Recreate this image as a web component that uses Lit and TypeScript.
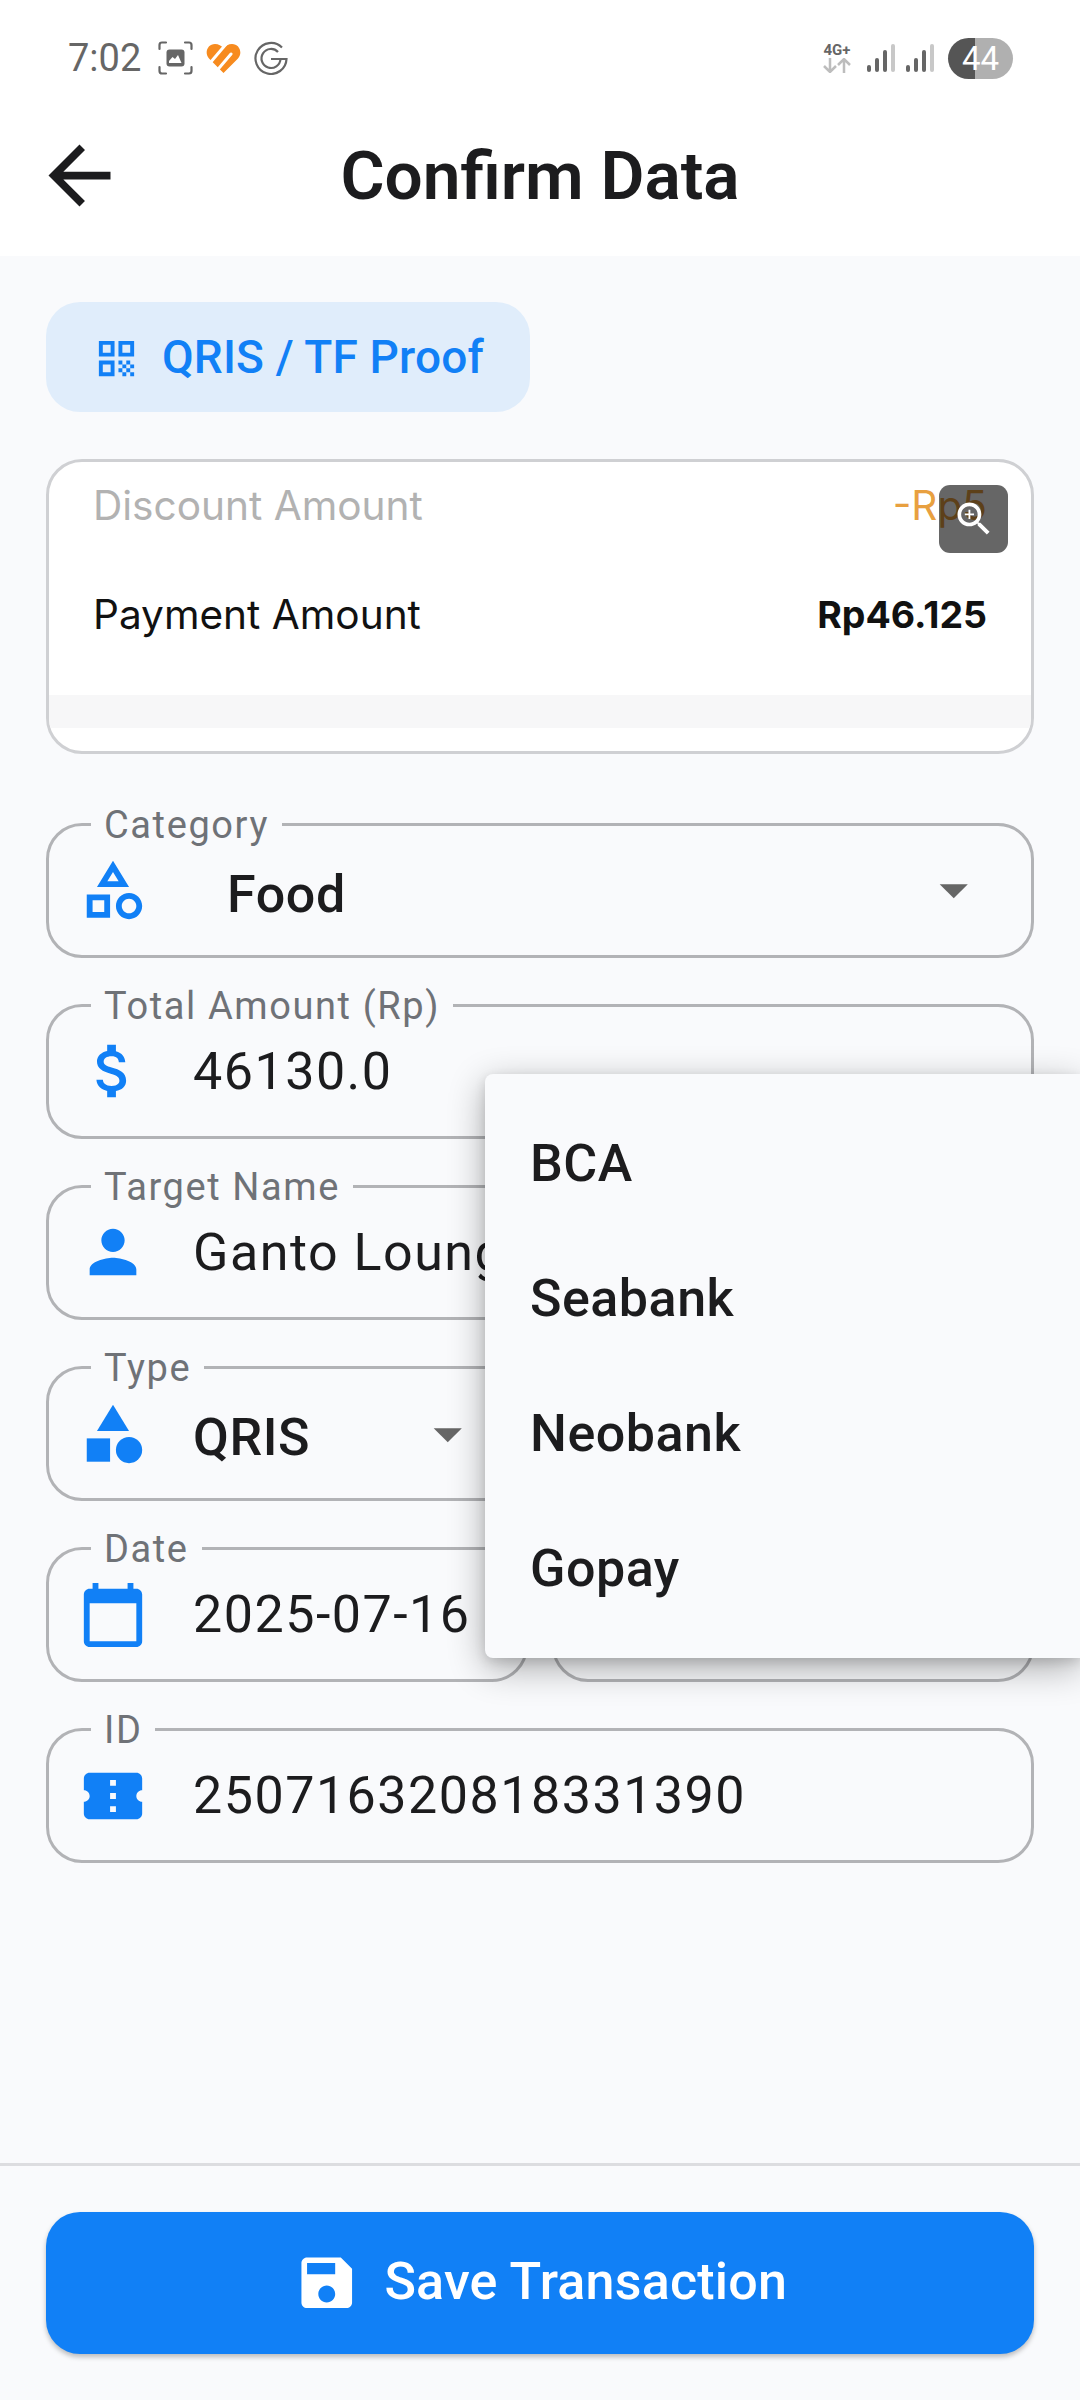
import { LitElement, html, css, svg } from "lit";
import { customElement } from "lit/decorators.js";

const icons = {
  back: svg`<path d="M20 11H7.83l5.59-5.59L12 4l-8 8 8 8 1.41-1.41L7.83 13H20v-2z"/>`,
  qr: svg`<path d="M3 11h8V3H3v8zm2-6h4v4H5V5zM3 21h8v-8H3v8zm2-6h4v4H5v-4zM13 3v8h8V3h-8zm6 6h-4V5h4v4zM19 19h2v2h-2zM13 13h2v2h-2zM15 15h2v2h-2zM13 17h2v2h-2zM15 19h2v2h-2zM17 17h2v2h-2zM17 13h2v2h-2zM19 15h2v2h-2z"/>`,
  zoom: svg`<path d="M15.5 14h-.79l-.28-.27C15.41 12.59 16 11.11 16 9.5 16 5.91 13.09 3 9.5 3S3 5.91 3 9.5 5.91 16 9.5 16c1.61 0 3.09-.59 4.23-1.57l.27.28v.79l5 4.99L20.49 19l-4.99-5zm-6 0C7.01 14 5 11.99 5 9.5S7.01 5 9.5 5 14 7.01 14 9.5 11.99 14 9.5 14z"/><path d="M12 10h-2v2H9v-2H7V9h2V7h1v2h2v1z"/>`,
  categoryOutline: svg`<path d="M12 2l-5.5 9h11L12 2zm0 3.84L13.93 9h-3.87L12 5.84zM17.5 13c-2.49 0-4.5 2.01-4.5 4.5s2.01 4.5 4.5 4.5 4.5-2.01 4.5-4.5-2.01-4.5-4.5-4.5zm0 7c-1.38 0-2.5-1.12-2.5-2.5s1.12-2.5 2.5-2.5 2.5 1.12 2.5 2.5-1.12 2.5-2.5 2.5zM3 21.5h8v-8H3v8zm2-6h4v4H5v-4z"/>`,
  category: svg`<path d="M12 2l-5.5 9h11z"/><circle cx="17.5" cy="17.5" r="4.5"/><path d="M3 13.5h8v8H3z"/>`,
  money: svg`<path d="M11.8 10.9c-2.27-.59-3-1.2-3-2.15 0-1.09 1.01-1.85 2.7-1.85 1.78 0 2.44.85 2.5 2.1h2.21c-.07-1.72-1.12-3.3-3.21-3.81V3h-3v2.16c-1.94.42-3.5 1.68-3.5 3.61 0 2.31 1.91 3.46 4.7 4.13 2.5.6 3 1.48 3 2.41 0 .69-.49 1.79-2.7 1.79-2.06 0-2.87-.92-2.98-2.1h-2.2c.12 2.19 1.76 3.42 3.68 3.83V21h3v-2.15c1.95-.37 3.5-1.5 3.5-3.55 0-2.84-2.43-3.81-4.7-4.4z"/>`,
  person: svg`<path d="M12 12c2.21 0 4-1.79 4-4s-1.79-4-4-4-4 1.79-4 4 1.79 4 4 4zm0 2c-2.67 0-8 1.34-8 4v2h16v-2c0-2.66-5.33-4-8-4z"/>`,
  calendar: svg`<path d="M20 3h-1V1h-2v2H7V1H5v2H4c-1.1 0-2 .9-2 2v16c0 1.1.9 2 2 2h16c1.1 0 2-.9 2-2V5c0-1.1-.9-2-2-2zm0 18H4V8h16v13z"/>`,
  ticket: svg`<path d="M22 10V6c0-1.11-.9-2-2-2H4c-1.1 0-1.99.89-1.99 2v4c1.1 0 1.99.9 1.99 2s-.89 2-2 2v4c0 1.1.9 2 2 2h16c1.1 0 2-.9 2-2v-4c-1.1 0-2-.9-2-2s.9-2 2-2zm-9 7.5h-2v-2h2v2zm0-4.5h-2v-2h2v2zm0-4.5h-2v-2h2v2z"/>`,
  drop: svg`<path d="M7 10l5 5 5-5z"/>`,
  save: svg`<path d="M17 3H5c-1.11 0-2 .9-2 2v14c0 1.1.89 2 2 2h14c1.1 0 2-.9 2-2V7l-4-4zm-5 16c-1.66 0-3-1.34-3-3s1.34-3 3-3 3 1.34 3 3-1.34 3-3 3zm3-10H5V5h10v4z"/>`,
};

const icon = (body: unknown, cls: string) =>
  html`<svg class=${cls} viewBox="0 0 24 24" fill="currentColor">${body}</svg>`;

@customElement("app-root")
export class AppRoot extends LitElement {
  static styles = css`
    :host {
      display: block;
      font-family: Roboto, "Liberation Sans", sans-serif;
      color: #1c1c1e;
    }
    .page {
      position: relative;
      width: 1080px;
      height: 2400px;
      overflow: hidden;
      display: flex;
      flex-direction: column;
      background: #f9fafc;
    }
    .top {
      height: 256px;
      background: #fff;
      flex: none;
    }
    .status {
      height: 84px;
      padding: 32px 67px 0 68px;
      box-sizing: border-box;
      display: flex;
      align-items: center;
      color: #666;
    }
    .time {
      font-size: 38px;
      width: 77px;
      letter-spacing: 0;
    }
    .st-left {
      display: flex;
      align-items: center;
      gap: 13px;
    }
    .st-right {
      margin-left: auto;
      display: flex;
      align-items: center;
    }
    .net {
      width: 36px;
      margin-right: 12px;
      display: flex;
      flex-direction: column;
      align-items: center;
      font-size: 15px;
      font-weight: 700;
      line-height: 15px;
    }
    .bars {
      display: flex;
      align-items: flex-end;
      gap: 4px;
      height: 28px;
      margin-right: 11px;
    }
    .bars i {
      display: block;
      width: 4px;
      background: #666;
      border-radius: 2px;
    }
    .bars i:last-child {
      background: #c8c8c8;
    }
    .battery {
      width: 65px;
      height: 41px;
      margin-left: 3px;
      border-radius: 21px;
      display: flex;
      align-items: center;
      justify-content: center;
      color: #fff;
      font-size: 33px;
      background: linear-gradient(90deg, #555 0 42%, #b0b0b0 42% 100%);
    }
    .bar {
      height: 171px;
      padding-top: 11px;
      box-sizing: border-box;
      display: flex;
      align-items: center;
      position: relative;
    }
    .back {
      width: 93px;
      height: 93px;
      margin-left: 33px;
      color: #1c1c1e;
    }
    h1 {
      flex: 1;
      margin: 0 0 0 -126px;
      text-align: center;
      font-size: 67.5px;
      font-weight: 600;
      letter-spacing: 0;
    }
    .form {
      flex: 1;
      padding: 46px 46px 0;
      display: flex;
      flex-direction: column;
      min-height: 0;
    }
    .chip {
      align-self: flex-start;
      width: 484px;
      height: 110px;
      box-sizing: border-box;
      padding-left: 47px;
      display: flex;
      align-items: center;
      gap: 22px;
      border-radius: 34px;
      background: #e0edfb;
      color: #1180f6;
      font-size: 46px;
      font-weight: 500;
      letter-spacing: 0.15px;
    }
    .chip svg {
      width: 47px;
      height: 47px;
      margin-top: 2px;
      flex: none;
    }
    .card {
      position: relative;
      margin: 47px 0 68.5px;
      height: 295px;
      box-sizing: border-box;
      border: 3px solid #cfd0d3;
      border-radius: 36px;
      background: #fff;
      overflow: hidden;
      padding-top: 13px;
    }
    .row {
      height: 60px;
      padding: 0 44px;
      display: flex;
      align-items: center;
      justify-content: space-between;
      font-family: Inter, "Liberation Sans", sans-serif;
      font-size: 40.6px;
      color: #111;
    }
    .row.dim {
      color: #b2b2b2;
    }
    .row.dim b {
      font-size: 40.6px;
      font-weight: 400;
      color: #e8a040;
    }
    .row + .row {
      margin-top: 49px;
    }
    .row b {
      font-size: 37.5px;
      font-weight: 700;
    }
    .strip {
      margin-top: 51px;
      height: 33px;
      background: #f7f7f8;
    }
    .zoom {
      position: absolute;
      top: 23px;
      right: 23px;
      width: 69px;
      height: 68px;
      border-radius: 11px;
      background: rgba(0, 0, 0, 0.6);
      display: flex;
      align-items: center;
      justify-content: center;
      color: #fff;
    }
    .zoom svg {
      width: 44px;
      height: 44px;
    }
    .fields {
      display: grid;
      grid-template-columns: 1fr 1fr;
      column-gap: 24px;
      row-gap: 46.2px;
    }
    .field {
      position: relative;
      height: 135px;
      box-sizing: border-box;
      border: 3px solid #b2b3b6;
      border-radius: 36px;
      padding: 0 44px 0 29px;
      display: flex;
      align-items: center;
      min-width: 0;
    }
    .field.wide {
      grid-column: 1 / -1;
    }
    .field label {
      position: absolute;
      left: 42px;
      top: -23px;
      padding: 0 13px;
      line-height: 44px;
      font-size: 38px;
      letter-spacing: 1.6px;
      color: #6f7277;
      background: #f9fafc;
      white-space: nowrap;
    }
    .field .ico {
      width: 70px;
      height: 70px;
      flex: none;
      color: #1180f6;
    }
    .value {
      margin-left: 45px;
      flex: 1;
      font-size: 52px;
      letter-spacing: 1.5px;
      white-space: nowrap;
    }
    .value.sel {
      font-weight: 500;
      letter-spacing: 0.6px;
      padding-top: 8px;
    }
    .value.shift {
      margin-left: 79px;
    }
    .field .drop {
      width: 67.5px;
      height: 67.5px;
      flex: none;
      color: #666;
    }
    .footer {
      flex: none;
      height: 237px;
      box-sizing: border-box;
      border-top: 3px solid #dcdde0;
      padding: 46px 46px 0;
    }
    .save {
      height: 142px;
      border-radius: 34px;
      background: #1180f6;
      color: #fff;
      display: flex;
      align-items: center;
      justify-content: center;
      gap: 24px;
      font-size: 52px;
      font-weight: 500;
      letter-spacing: 0.2px;
      box-shadow: 0 3px 5px rgba(0, 0, 0, 0.25);
    }
    .save span {
      margin-top: -3px;
    }
    .save svg {
      width: 67.5px;
      height: 67.5px;
    }
    .menu {
      position: absolute;
      left: 485px;
      top: 1074px;
      width: 595px;
      padding: 22px 0;
      border-radius: 8px 0 0 8px;
      background: #f9fafc;
      box-shadow: 0 10px 36px rgba(0, 0, 0, 0.32), 0 4px 12px rgba(0, 0, 0, 0.12);
    }
    .menu div {
      height: 135px;
      padding-left: 45px;
      display: flex;
      align-items: center;
      font-size: 52px;
      font-weight: 500;
      letter-spacing: 0.5px;
    }
  `;

  private field(
    label: string,
    ico: unknown,
    value: string,
    opts: { wide?: boolean; select?: boolean; shift?: boolean } = {}
  ) {
    const valueCls = `value ${opts.select ? "sel" : ""} ${opts.shift ? "shift" : ""}`;
    return html`<div class="field ${opts.wide ? "wide" : ""}">
      <label>${label}</label>
      ${icon(ico, "ico")}
      <span class=${valueCls}>${value}</span>
      ${opts.select ? icon(icons.drop, "drop") : ""}
    </div>`;
  }

  private statusBar() {
    return html`<div class="status">
      <div class="st-left">
        <span class="time">7:02</span>
        <svg width="35" height="34" viewBox="0 0 35 34" fill="none" stroke="#666" stroke-width="2.2" stroke-linecap="round">
          <path d="M1.5 8V4q0-2.5 2.500-2.500h4M27 1.500h4q2.500 0 2.500 2.500v4M33.500 26v4q0 2.500-2.500 2.500h-4M8 32.500H4q-2.500 0-2.500-2.500v-4" />
          <rect x="8.500" y="8.500" width="18" height="17" rx="3" fill="#666" stroke="none" />
          <path d="M11 22v-2l3.500-4 2.500 2 3-4 3.500 8z" fill="#fff" stroke="none" />
        </svg>
        <svg width="35" height="29" viewBox="0 0 35 29">
          <path fill="#f78b1f" d="M17.500 29 3 14.500C-2 9 1.500 0 9 0c3.500 0 6.500 1.500 8.500 4.500C19.500 1.500 22.500 0 26 0c7.500 0 11 9 6 14.500z" />
          <path stroke="#fff" stroke-width="3" fill="none" d="M4 19 21-1" />
          <path stroke="#fff" stroke-width="3" fill="none" stroke-linecap="round" d="M8 30 25 10" />
        </svg>
        <svg width="34" height="34" viewBox="0 0 34 34" fill="none" stroke="#666" stroke-width="2.200">
          <path d="M28 6.500A15.500 15.500 0 1 0 32.500 18H17" />
          <path d="M24 11A9.500 9.500 0 1 0 26.500 18" />
        </svg>
      </div>
      <div class="st-right">
        <div class="net">
          <span>4G+</span>
          <svg width="30" height="15" viewBox="0 0 30 15" fill="none" stroke="#bdbdbd" stroke-width="2.500">
            <path d="M8 0v13M2 8l6 6 6-6" />
            <path d="M22 15V2M16 7l6-6 6 6" />
          </svg>
        </div>
        <div class="bars"><i style="height:7px"></i><i style="height:14px"></i><i style="height:22px"></i><i style="height:28px"></i></div>
        <div class="bars"><i style="height:7px"></i><i style="height:14px"></i><i style="height:22px"></i><i style="height:28px"></i></div>
        <div class="battery">44</div>
      </div>
    </div>`;
  }

  render() {
    return html`<div class="page">
      <div class="top">
        ${this.statusBar()}
        <div class="bar">
          ${icon(icons.back, "back")}
          <h1>Confirm Data</h1>
        </div>
      </div>
      <div class="form">
        <div class="chip">${icon(icons.qr, "")}QRIS / TF Proof</div>
        <div class="card">
          <div class="row dim"><span>Discount Amount</span><b>-Rp5</b></div>
          <div class="row"><span>Payment Amount</span><b>Rp46.125</b></div>
          <div class="strip"></div>
          <div class="zoom">${icon(icons.zoom, "")}</div>
        </div>
        <div class="fields">
          ${this.field("Category", icons.categoryOutline, "Food", { wide: true, select: true, shift: true })}
          ${this.field("Total Amount (Rp)", icons.money, "46130.0", { wide: true })}
          ${this.field("Target Name", icons.person, "Ganto Lounge", { wide: true })}
          ${this.field("Type", icons.category, "QRIS", { select: true })}
          <div class="field"></div>
          ${this.field("Date", icons.calendar, "2025-07-16")}
          <div class="field"></div>
          ${this.field("ID", icons.ticket, "250716320818331390", { wide: true })}
        </div>
      </div>
      <div class="footer">
        <div class="save">${icon(icons.save, "")}<span>Save Transaction</span></div>
      </div>
      <div class="menu">
        <div>BCA</div>
        <div>Seabank</div>
        <div>Neobank</div>
        <div>Gopay</div>
      </div>
    </div>`;
  }
}
